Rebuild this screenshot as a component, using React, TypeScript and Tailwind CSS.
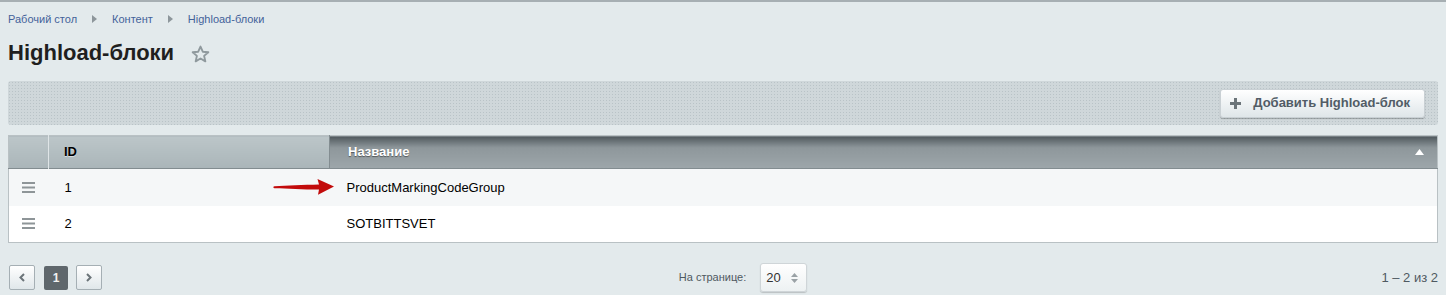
import React from "react";

// ─── Icons ───────────────────────────────────────────────────────────────────

function StarIcon() {
  return (
    <svg width="19" height="18" viewBox="0 0 24 23" fill="none" stroke="#8f999d" strokeWidth="2.4" strokeLinejoin="round" aria-hidden="true">
      <path d="M12 2l2.9 6.6 7.1.6-5.4 4.7 1.6 7-6.2-3.7-6.2 3.7 1.6-7L2 9.2l7.1-.6z" />
    </svg>
  );
}

function CrumbArrow() {
  return (
    <svg width="5" height="8" viewBox="0 0 5 8" aria-hidden="true">
      <path d="M0 0l5 4-5 4z" fill="#8d969b" />
    </svg>
  );
}

function PlusIcon() {
  return (
    <svg width="11" height="11" viewBox="0 0 11 11" aria-hidden="true">
      <path d="M4 0h3v4h4v3H7v4H4V7H0V4h4z" fill="#6b7479" />
    </svg>
  );
}

function MenuIcon() {
  return (
    <svg width="13" height="11" viewBox="0 0 13 11" aria-hidden="true">
      <rect x="0" y="0" width="13" height="2" fill="#8e9598" />
      <rect x="0" y="4.5" width="13" height="2" fill="#8e9598" />
      <rect x="0" y="9" width="13" height="2" fill="#8e9598" />
    </svg>
  );
}

function RedArrow() {
  return (
    <svg width="62" height="18" viewBox="0 0 62 18" aria-hidden="true">
      <path
        d="M1.5 8.2C14 7.6 30 6.8 46 6.4L44.5 1 61 8.6 45 16.8 46 11.6C30 11.4 14 10.6 1.5 10.2 0 10 0 8.4 1.5 8.2z"
        fill="#c20b0b"
      />
    </svg>
  );
}

function Chevron({ dir }: { dir: "left" | "right" }) {
  return (
    <svg width="6" height="9" viewBox="0 0 6 9" aria-hidden="true">
      {dir === "left" ? (
        <path d="M5 1L1.5 4.5 5 8" fill="none" stroke="#6b7479" strokeWidth="2" />
      ) : (
        <path d="M1 1l3.5 3.5L1 8" fill="none" stroke="#6b7479" strokeWidth="2" />
      )}
    </svg>
  );
}

function SelectArrows() {
  return (
    <svg width="7" height="10" viewBox="0 0 7 10" aria-hidden="true">
      <path d="M3.5 0L7 4H0z" fill="#9aa2a6" />
      <path d="M3.5 10L7 6H0z" fill="#9aa2a6" />
    </svg>
  );
}

// ─── Data ────────────────────────────────────────────────────────────────────

const rows = [
  { id: 1, name: "ProductMarkingCodeGroup", arrow: true },
  { id: 2, name: "SOTBITTSVET", arrow: false },
];

// ─── Page ────────────────────────────────────────────────────────────────────

export default function App() {
  return (
    <div className="min-h-[295px] border-t-2 border-[#a7afb3] bg-[#e3eaec] px-2 font-['Liberation_Sans',Arial,sans-serif] text-[13px] text-black">
      {/* breadcrumbs */}
      <div className="flex items-center pt-[10px] text-[11px] leading-[14px] text-[#44629a]">
        <span>Рабочий стол</span>
        <span className="mx-[15px] flex items-center"><CrumbArrow /></span>
        <span>Контент</span>
        <span className="mx-[15px] flex items-center"><CrumbArrow /></span>
        <span>Highload-блоки</span>
      </div>

      {/* title */}
      <div className="mt-[12px] flex items-center">
        <h1 className="text-[22px] font-bold leading-[30px] text-[#1f1f1f]">Highload-блоки</h1>
        <span className="ml-[17px] mt-[2px] flex items-center"><StarIcon /></span>
      </div>

      {/* toolbar */}
      <div className="mt-[13px] flex h-[44px] items-center justify-end rounded-[3px] bg-[#cfd7da] bg-[radial-gradient(#b9c3c7_0.8px,transparent_0.9px)] bg-[length:3px_3px] pr-[13px]">
        <button
          type="button"
          className="flex h-[29px] items-center gap-[12px] rounded-[3px] border border-[#c9d0d4] bg-gradient-to-b from-white to-[#dfe6e9] pl-[9px] pr-[14px] text-[13px] font-bold text-[#525c66] shadow-[0_1px_1px_rgba(0,0,0,0.25)]"
        >
          <PlusIcon />
          Добавить Highload-блок
        </button>
      </div>

      {/* table */}
      <table className="mt-[10px] w-full border-collapse border border-[#b9c1c4] bg-white">
        <thead>
          <tr className="h-[33px] border-b border-[#828c90] text-left">
            <th className="w-[40px] border-r border-[#dfe5e7] bg-gradient-to-b from-[#bcc6c9] to-[#aab5b9] p-0" />
            <th className="w-[281px] border-r border-[#838d91] bg-gradient-to-b from-[#bcc6c9] to-[#aab5b9] pl-[15px] text-[13px] font-bold text-black [text-shadow:0_1px_0_rgba(255,255,255,0.5)]">
              ID
            </th>
            <th className="bg-[linear-gradient(#4f585d,#8e979b_35%,#9da6aa)] pl-[18px] pr-[13px] text-[13px] font-bold text-white [text-shadow:0_1px_1px_rgba(0,0,0,0.45)]">
              <div className="flex items-center justify-between">
                <span>Название</span>
                <svg width="9" height="6" viewBox="0 0 9 6" aria-hidden="true">
                  <path d="M4.5 0L9 6H0z" fill="#ffffff" />
                </svg>
              </div>
            </th>
          </tr>
        </thead>
        <tbody>
          {rows.map((r, i) => (
            <tr key={r.id} className={`h-[37px] ${i === 0 ? "bg-[#f5f7f8]" : "bg-white"}`}>
              <td className="pl-[13px]">
                <div className="flex items-center"><MenuIcon /></div>
              </td>
              <td className="pl-[16px]">
                <div className="flex items-center justify-between">
                  <span>{r.id}</span>
                  {r.arrow && (
                    <span className="mr-[-5px] flex items-center"><RedArrow /></span>
                  )}
                </div>
              </td>
              <td className="pl-[17px]">{r.name}</td>
            </tr>
          ))}
        </tbody>
      </table>

      {/* footer */}
      <div className="mt-[20px] flex items-center justify-between">
        <div className="flex w-[420px] items-center">
          <button type="button" className="ml-[1px] flex h-[25px] w-[26px] items-center justify-center rounded-[2px] border border-[#a5afb4] bg-gradient-to-b from-white to-[#e0e7ea]">
            <Chevron dir="left" />
          </button>
          <span className="ml-[9px] flex h-[24px] w-[24px] items-center justify-center rounded-[2px] bg-[#5f676c] text-[12px] font-bold text-[#f1f1f1]">
            1
          </span>
          <button type="button" className="ml-[8px] flex h-[25px] w-[26px] items-center justify-center rounded-[2px] border border-[#a5afb4] bg-gradient-to-b from-white to-[#e0e7ea]">
            <Chevron dir="right" />
          </button>
        </div>

        <div className="ml-[40px] flex items-center">
          <span className="text-[11px] text-[#4f5961]">На странице:</span>
          <div className="ml-[14px] flex h-[29px] w-[47px] items-center justify-between rounded-[3px] border border-[#cfd5d8] bg-gradient-to-b from-white to-[#edf1f2] pl-[5px] pr-[8px] text-[13px] text-[#333] shadow-[0_1px_1px_rgba(0,0,0,0.18)]">
            <span>20</span>
            <SelectArrows />
          </div>
        </div>

        <div className="flex w-[420px] justify-end text-[13px] text-[#4f5961]">1 – 2 из 2</div>
      </div>
    </div>
  );
}
